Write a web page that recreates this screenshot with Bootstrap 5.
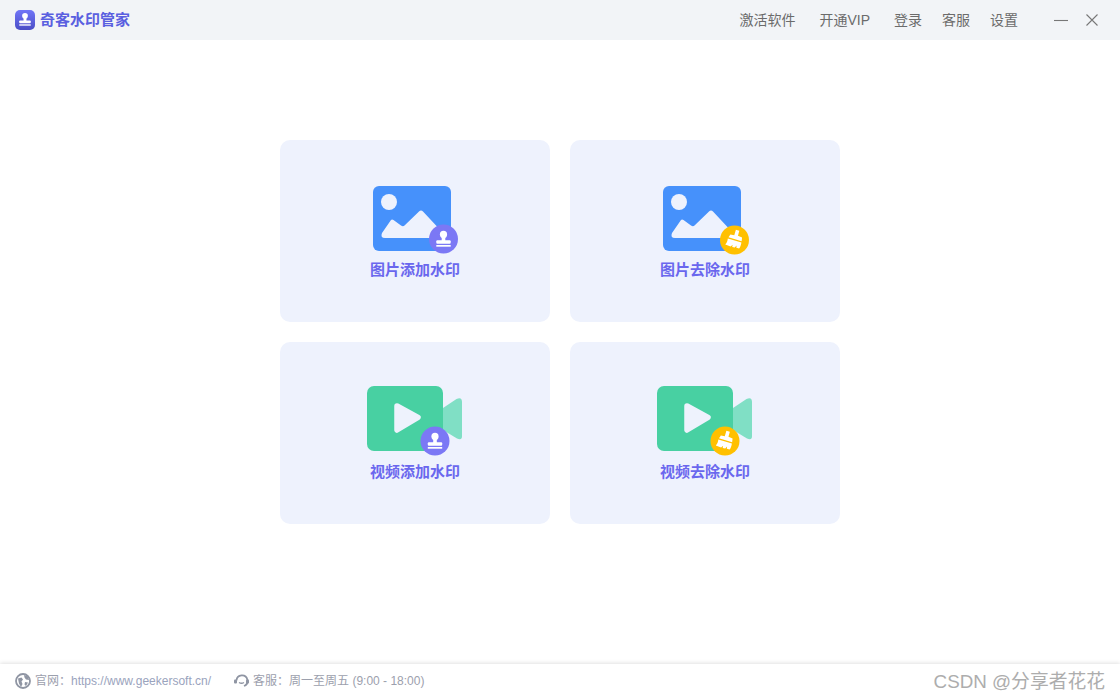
<!DOCTYPE html>
<html lang="zh-CN">
<head>
  <meta charset="UTF-8">
  <title>奇客水印管家</title>
  <link href="https://cdn.jsdelivr.net/npm/bootstrap@5.3.0/dist/css/bootstrap.min.css" rel="stylesheet">
  <style>
    body {
      font-family: "Liberation Sans", "Noto Sans CJK SC", sans-serif;
      background: #fff;
      overflow: hidden;
    }
    .title-bar {
      height: 40px;
      background: #f2f4f7;
      padding-left: 15px;
    }
    .app-name {
      font-size: 15px;
      font-weight: 700;
      color: #5a5fe0;
      margin-left: 5px;
    }
    .top-links {
      font-size: 14px;
      color: #6b6b6b;
      gap: 20px;
    }
    .top-links .wide-gap { margin-right: 4px; }
    .win-btns {
      margin-left: 36px;
      margin-right: 22px;
      gap: 18px;
    }
    .main-area {
      padding-top: 100px;
    }
    .tool-grid {
      display: grid;
      grid-template-columns: 270px 270px;
      grid-auto-rows: 182px;
      gap: 20px;
    }
    .tool-card {
      background: #eef2fd;
      border-radius: 10px;
      padding-top: 44px;
    }
    .tool-name {
      font-size: 15px;
      line-height: 20px;
      font-weight: 700;
      color: #6a67ee;
      margin-top: 4px;
    }
    .foot-bar {
      height: 36px;
      padding-bottom: 2px;
      box-shadow: 0 -1px 4px rgba(0, 0, 0, .12);
      font-size: 12px;
      color: #9ca0ad;
      padding-left: 15px;
      position: relative;
    }
    .foot-item { gap: 4px; margin-right: 23px; }
    .foot-url { color: #9aa3bd; }
    .mark-text {
      position: absolute;
      right: 15px;
      top: 5px;
      font-size: 18.8px;
      line-height: 26px;
      color: #adadad;
    }
  </style>
</head>
<body>
  <svg width="0" height="0" class="position-absolute">
    <symbol id="stamp" viewBox="-10 -10 20 20">
      <circle cx="0" cy="-4.6" r="3.6" fill="#fff"/>
      <rect x="-1.8" y="-3" width="3.6" height="5" fill="#fff"/>
      <rect x="-7.2" y="1.2" width="14.4" height="3.6" rx="1" fill="#fff"/>
      <rect x="-7.2" y="6" width="14.4" height="1.7" fill="#fff"/>
    </symbol>
    <symbol id="broom" viewBox="-10 -10 20 20">
      <path d="M1.2 -9 L4.2 -8 L3 -3.6 L6.6 -2.2 L6.2 1 L-5.2 -2.4 L-3.6 -4.8 L-.2 -4.2 Z" fill="#fff"/>
      <path d="M-5.8 -1.2 L6 2.2 C5.6 4.6 5 6.4 4 7.4 L1.6 6.8 L1.8 4.8 L.2 6.6 L-2 6 L-1.6 4.2 L-3.4 5.6 L-8 4 C-6.8 2.8 -6 1 -5.8 -1.2 Z" fill="#fff"/>
    </symbol>
    <symbol id="pic" viewBox="0 0 110 72">
      <rect x="13" y="2" width="78" height="65" rx="6" fill="#4691fb"/>
      <circle cx="29" cy="18" r="8" fill="#eef2fd"/>
      <path d="M22 49 L31 36 Q32 35 33.5 36 L41 41.5 Q43 43 44.5 41.5 L59 27.5 Q61 25.5 63 27.5 L84 50 L84 54 L25 54 Q20 54 22 49 Z" fill="#eef2fd"/>
    </symbol>
    <symbol id="vid" viewBox="0 0 110 72">
      <rect x="7" y="0" width="76" height="65" rx="7" fill="#48d0a2"/>
      <path d="M83 22 L96.5 13 Q102 10.500 102 16 L102 50 Q102 55 97 52.500 L83 44 Z" fill="#80dfc5"/>
      <path d="M37 20 L58 31.500 L37 44 Z" fill="#eef2fd" stroke="#eef2fd" stroke-width="5.500" stroke-linejoin="round"/>
    </symbol>
  </svg>

  <div class="d-flex flex-column vh-100">
    <div class="title-bar d-flex align-items-center justify-content-between flex-shrink-0">
      <div class="d-flex align-items-center">
        <svg width="20" height="20" viewBox="0 0 20 20">
          <defs>
            <linearGradient id="logoFill" x1="0" y1="0" x2="0" y2="1">
              <stop offset="0" stop-color="#7176f8"/>
              <stop offset="1" stop-color="#4a4dc6"/>
            </linearGradient>
          </defs>
          <rect width="20" height="20" rx="5" fill="url(#logoFill)"/>
          <use href="#stamp" x="2" y="1.500" width="16" height="16"/>
        </svg>
        <span class="app-name">奇客水印管家</span>
      </div>
      <div class="d-flex align-items-center">
        <div class="top-links d-flex align-items-center">
          <span class="wide-gap">激活软件</span>
          <span class="wide-gap">开通VIP</span>
          <span>登录</span>
          <span>客服</span>
          <span>设置</span>
        </div>
        <div class="win-btns d-flex align-items-center">
          <svg width="14" height="14" viewBox="0 0 14 14"><path d="M0 7.500H14" stroke="#777" stroke-width="1.100"/></svg>
          <svg width="12" height="12" viewBox="0 0 12 12"><path d="M.5 .5L11.500 11.500M11.500 .5L.5 11.500" stroke="#777" stroke-width="1.100"/></svg>
        </div>
      </div>
    </div>

    <div class="main-area flex-grow-1 d-flex justify-content-center">
      <div class="tool-grid">
        <div class="tool-card d-flex flex-column align-items-center">
          <svg width="110" height="72" viewBox="0 0 110 72">
            <use href="#pic" width="110" height="72"/>
            <circle cx="83.500" cy="55" r="14.500" fill="#7b78f5"/>
            <use href="#stamp" x="73.500" y="45" width="20" height="20"/>
          </svg>
          <div class="tool-name">图片添加水印</div>
        </div>
        <div class="tool-card d-flex flex-column align-items-center">
          <svg width="110" height="72" viewBox="0 0 110 72">
            <use href="#pic" width="110" height="72"/>
            <circle cx="84.500" cy="56" r="14.500" fill="#ffc000"/>
            <use href="#broom" x="73" y="44.500" width="23" height="23"/>
          </svg>
          <div class="tool-name">图片去除水印</div>
        </div>
        <div class="tool-card d-flex flex-column align-items-center">
          <svg width="110" height="72" viewBox="0 0 110 72">
            <use href="#vid" width="110" height="72"/>
            <circle cx="75" cy="55" r="14.500" fill="#7b78f5"/>
            <use href="#stamp" x="65" y="45" width="20" height="20"/>
          </svg>
          <div class="tool-name">视频添加水印</div>
        </div>
        <div class="tool-card d-flex flex-column align-items-center">
          <svg width="110" height="72" viewBox="0 0 110 72">
            <use href="#vid" width="110" height="72"/>
            <circle cx="75" cy="55" r="14.500" fill="#ffc000"/>
            <use href="#broom" x="63.500" y="43.500" width="23" height="23"/>
          </svg>
          <div class="tool-name">视频去除水印</div>
        </div>
      </div>
    </div>

    <div class="foot-bar d-flex align-items-center flex-shrink-0">
      <div class="foot-item d-flex align-items-center">
        <svg width="16" height="16" viewBox="0 0 16 16">
          <circle cx="8" cy="8" r="7" fill="none" stroke="#8f95a3" stroke-width="1.800"/>
          <path d="M3 5.500L6.500 4.500L8 6.500L6.500 8.500L7.500 11L6 14L4 10.500ZM9 2L13 3.500L14 7L11 6.500L9.500 4.500ZM10 9L13 9.500L11 13L9.500 11.500Z" fill="#8f95a3"/>
        </svg>
        <span>官网：<span class="foot-url">https://www.geekersoft.cn/</span></span>
      </div>
      <div class="foot-item d-flex align-items-center">
        <svg width="15" height="16" viewBox="0 0 15 16">
          <path d="M2.500 7.500A5.500 5.500 0 1 1 10 13" fill="none" stroke="#8f95a3" stroke-width="1.800"/>
          <rect x="0" y="6.500" width="3" height="4" rx="1" fill="#8f95a3"/>
          <rect x="12" y="6.500" width="3" height="4" rx="1" fill="#8f95a3"/>
          <path d="M5 9.500Q7.500 11 10 9.500" fill="none" stroke="#8f95a3" stroke-width="1.300"/>
        </svg>
        <span>客服：周一至周五 (9:00 - 18:00)</span>
      </div>
      <div class="mark-text">CSDN @分享者花花</div>
    </div>
  </div>

  <script src="https://cdn.jsdelivr.net/npm/bootstrap@5.3.0/dist/js/bootstrap.bundle.min.js"></script>
</body>
</html>
